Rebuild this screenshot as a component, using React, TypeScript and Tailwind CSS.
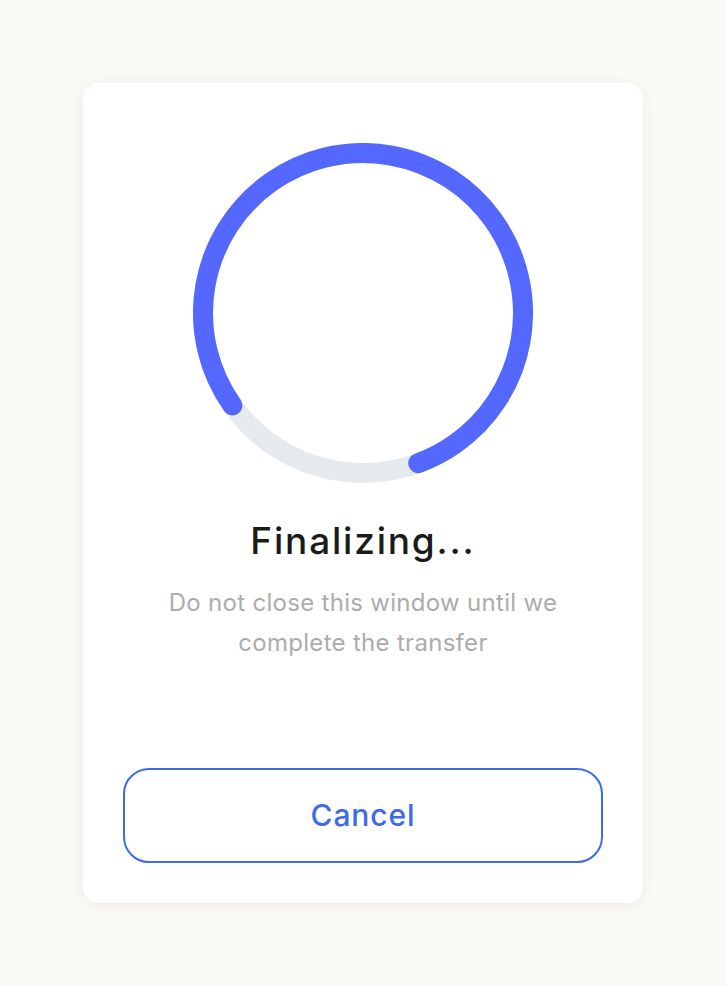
import React from 'react';

const SIZE = 340;
const STROKE = 20;
const R = (SIZE - STROKE) / 2;
const CIRC = 2 * Math.PI * R;
// progress arc begins at ~145deg (screen coords, clockwise) and sweeps ~285deg
const START_DEG = 144.7;
const SWEEP_DEG = 285;

function ProgressRing() {
  const dash = (SWEEP_DEG / 360) * CIRC;
  return (
    <svg width={SIZE} height={SIZE} viewBox={`0 0 ${SIZE} ${SIZE}`}>
      <circle cx={SIZE / 2} cy={SIZE / 2} r={R} fill="none" stroke="#e7eaed" strokeWidth={STROKE} />
      <circle
        cx={SIZE / 2}
        cy={SIZE / 2}
        r={R}
        fill="none"
        stroke="#5468ff"
        strokeWidth={STROKE}
        strokeLinecap="round"
        strokeDasharray={`${dash} ${CIRC}`}
        transform={`rotate(${START_DEG} ${SIZE / 2} ${SIZE / 2})`}
      />
    </svg>
  );
}

export default function App() {
  return (
    <div
      className="min-h-screen flex items-center justify-center bg-[#faf9f6]"
      style={{ fontFamily: 'Inter, "Noto Sans", sans-serif' }}
    >
      <div className="w-[560px] h-[820px] bg-white rounded-2xl shadow-[0_2px_16px_rgba(0,0,0,0.06)] flex flex-col items-center pt-[60px] px-10 pb-10">
        <ProgressRing />

        <h1 className="mt-[36px] text-[37px] leading-[44px] font-medium text-[#1b1b1b] tracking-[1.8px]">
          Finalizing...
        </h1>
        <p className="mt-[20px] text-center text-[24px] leading-[40px] text-[#acacac] tracking-[0.3px]">
          Do not close this window until we
          <br />
          complete the transfer
        </p>

        <button className="mt-auto w-full h-[95px] rounded-[26px] border-2 border-[#3d6be8] text-[#3d6be8] text-[30px] font-medium tracking-[0.9px]">
          Cancel
        </button>
      </div>
    </div>
  );
}
